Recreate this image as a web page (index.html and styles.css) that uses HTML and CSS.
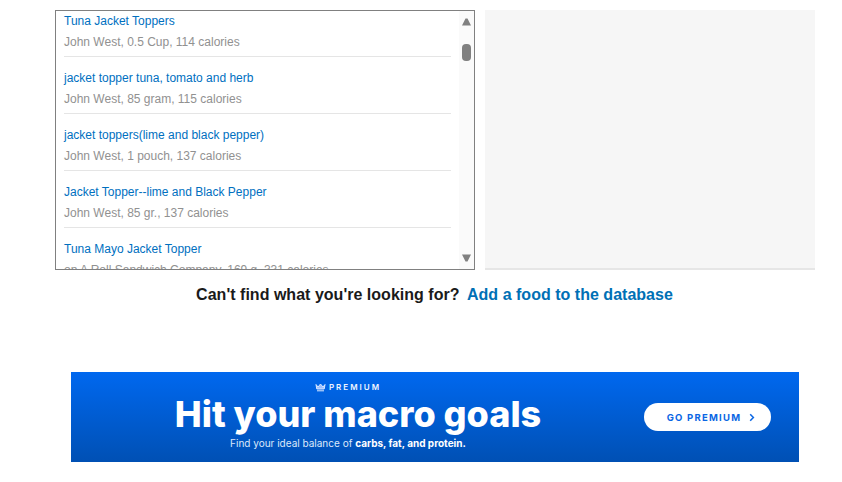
FILE: index.html
```html
<!DOCTYPE html>
<html lang="en">
<head>
<meta charset="utf-8">
<title>Food search</title>
<link rel="stylesheet" href="styles.css">
</head>
<body>
<main class="page">
  <section class="panels">
    <div class="results">
      <ul class="list">
        <li class="item"><a class="name">Tuna Jacket Toppers</a><p class="meta">John West, 0.5 Cup, 114 calories</p></li>
        <li class="item"><a class="name">jacket topper tuna, tomato and herb</a><p class="meta">John West, 85 gram, 115 calories</p></li>
        <li class="item"><a class="name">jacket toppers(lime and black pepper)</a><p class="meta">John West, 1 pouch, 137 calories</p></li>
        <li class="item"><a class="name">Jacket Topper--lime and Black Pepper</a><p class="meta">John West, 85 gr., 137 calories</p></li>
        <li class="item"><a class="name">Tuna Mayo Jacket Topper</a><p class="meta">on A Roll Sandwich Company, 169 g, 331 calories</p></li>
      </ul>
      <div class="scrollbar">
        <svg class="arrow" width="9" height="8" viewBox="0 0 9 8"><path d="M3.5 0.5 H5.5 L9 7.5 H0 Z"/></svg>
        <div class="thumb"></div>
        <svg class="arrow arrow-down" width="9" height="8" viewBox="0 0 9 8"><path d="M0 0.5 H9 L5.5 7.5 H3.5 Z"/></svg>
      </div>
    </div>
    <div class="detail"></div>
  </section>
  <p class="notfound">Can't find what you're looking for? <a class="add">Add a food to the database</a></p>
  <aside class="banner">
    <div class="pitch">
      <div class="tag">
        <svg width="11" height="9" viewBox="0 0 11 9"><path d="M1 1.5 L3 4 L5.5 1 L8 4 L10 1.5 L9.2 6 H1.8 Z" fill="#9fc2ff" stroke="#dbe8ff" stroke-width="1"/><path d="M2 7.8 H9" stroke="#dbe8ff" stroke-width="1"/></svg>
        <span>PREMIUM</span>
      </div>
      <h2 class="headline">Hit your macro goals</h2>
      <p class="sub">Find your ideal balance of <b>carbs, fat, and protein.</b></p>
    </div>
    <div class="cta">
      <span>GO PREMIUM</span>
      <svg width="6" height="9" viewBox="0 0 6 9"><path d="M1.2 1.2 L4.4 4.5 L1.2 7.8" fill="none" stroke="#0a66e4" stroke-width="1.5"/></svg>
    </div>
  </aside>
</main>
</body>
</html>
```
FILE: styles.css
```css
html, body { margin: 0; padding: 0; background: #fff; }
body { font-family: "Liberation Sans", Arial, sans-serif; overflow: hidden; }
.page { width: 842px; height: 482px; padding-top: 10px; box-sizing: border-box; }
.panels { display: flex; gap: 10px; margin-left: 55px; height: 260px; }
.results { width: 420px; box-sizing: border-box; border: 1px solid #808080; display: flex; overflow: hidden; }
.list { list-style: none; margin: 0; padding: 0 8px; flex: 1; min-width: 0; overflow: hidden; }
.item { height: 45px; margin-bottom: 11px; border-bottom: 1px solid #e5e5e5; }
.item:last-child { border-bottom: 0; }
.name { display: block; font-size: 12px; line-height: 14px; color: #0070bf; padding-top: 3px; }
.meta { margin: 7px 0 0; font-size: 12px; line-height: 14px; color: #919191; white-space: nowrap; }
.scrollbar { width: 15px; flex: none; background: #fafafa; display: flex; flex-direction: column; align-items: center; padding: 7px 0; box-sizing: border-box; }
.arrow { fill: #808080; flex: none; }
.arrow-down { margin-top: auto; }
.thumb { width: 9px; height: 17px; border-radius: 4px; background: #808080; margin-top: 18px; }
.detail { width: 330px; height: 260px; box-sizing: border-box; background: #f6f6f6; border-bottom: 2px solid #e6e6e6; }
.notfound { margin: 15px 0 0; text-align: center; padding-left: 27px; font-size: 16px; line-height: 19px; font-weight: bold; color: #1a1a1a; letter-spacing: 0.02px; }
.add { color: #0070b5; margin-left: 3px; }
.banner { display: flex; align-items: center; width: 728px; height: 90px; margin: 68px 0 0 71px; background: linear-gradient(#0068ef, #0050b4); font-family: Inter, sans-serif; color: #fff; }
.pitch { width: 554px; display: flex; flex-direction: column; align-items: center; padding-bottom: 1px; }
.tag { display: flex; align-items: center; gap: 3px; font-size: 8px; line-height: 9px; font-weight: 600; letter-spacing: 2px; color: #f0f5ff; margin-bottom: 1px; }
.headline { margin: 0; padding-left: 20px; font-size: 36px; line-height: 42px; font-weight: 800; }
.sub { margin: 2px 0 0; font-size: 10px; line-height: 13px; color: #dce8fb; }
.sub b { font-weight: 700; color: #fff; }
.cta { margin-left: 19px; width: 127px; height: 28px; box-sizing: border-box; padding-left: 7px; border-radius: 14px; background: #fff; color: #0a66e4; display: flex; align-items: center; justify-content: center; gap: 8px; font-size: 9.5px; font-weight: 700; letter-spacing: 1.25px; }
```
